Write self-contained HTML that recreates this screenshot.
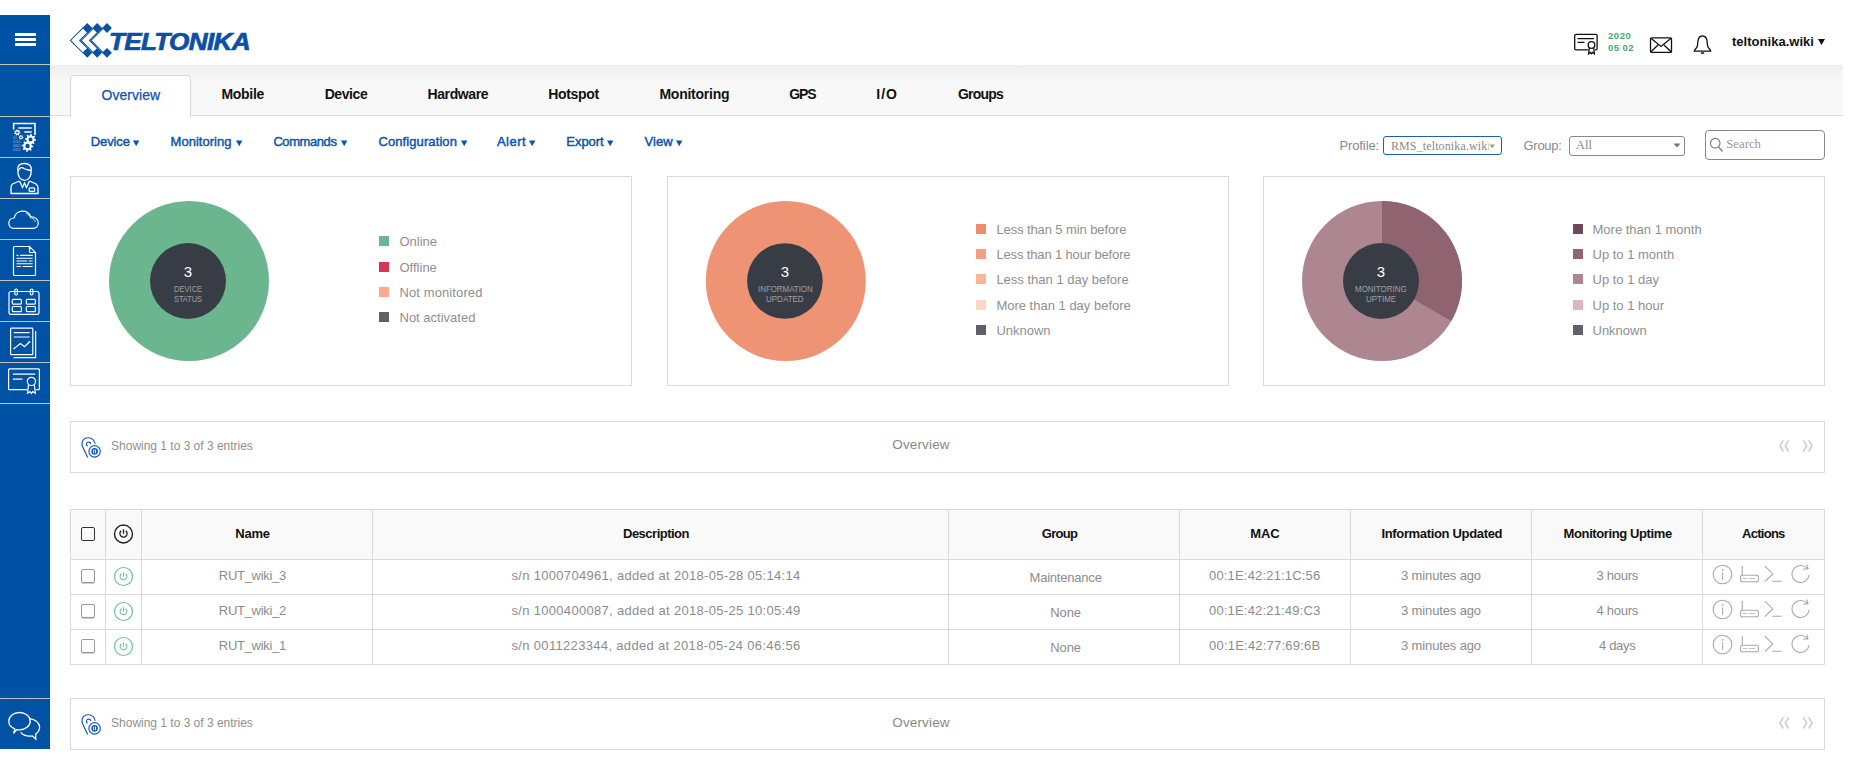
<!DOCTYPE html>
<html><head><meta charset="utf-8"><style>
html,body{margin:0;padding:0;background:#fff;width:1858px;height:765px;overflow:hidden;position:relative;font-family:"Liberation Sans",sans-serif;}
.t{position:absolute;white-space:nowrap;}
.b{position:absolute;box-sizing:content-box;}
.s{position:absolute;overflow:visible;}
</style></head><body>
<div class="b" style="left:0px;top:15px;width:50px;height:734px;background:#0052a4;"></div>
<div class="b" style="left:0px;top:64px;width:50px;height:1px;background:#c6c3bd;"></div>
<div class="b" style="left:0px;top:116px;width:50px;height:1px;background:#c6c3bd;"></div>
<div class="b" style="left:0px;top:157px;width:50px;height:1px;background:#c6c3bd;"></div>
<div class="b" style="left:0px;top:198px;width:50px;height:1px;background:#c6c3bd;"></div>
<div class="b" style="left:0px;top:239px;width:50px;height:1px;background:#c6c3bd;"></div>
<div class="b" style="left:0px;top:280px;width:50px;height:1px;background:#c6c3bd;"></div>
<div class="b" style="left:0px;top:321px;width:50px;height:1px;background:#c6c3bd;"></div>
<div class="b" style="left:0px;top:362px;width:50px;height:1px;background:#c6c3bd;"></div>
<div class="b" style="left:0px;top:403px;width:50px;height:1px;background:#c6c3bd;"></div>
<div class="b" style="left:0px;top:698px;width:50px;height:1px;background:#c6c3bd;"></div>
<div class="b" style="left:15px;top:33px;width:21px;height:3px;background:#fff;"></div>
<div class="b" style="left:15px;top:38px;width:21px;height:3px;background:#fff;"></div>
<div class="b" style="left:15px;top:43px;width:21px;height:3px;background:#fff;"></div>
<svg class="s" style="left:0px;top:116px;" width="50" height="41" viewBox="0 116 50 41"><path d="M13.6,129.5 V123.5 H35 V135" stroke="#fff" fill="none" stroke-width="1.6"/><path d="M18.3,128 H31.7 M24.3,132 H31.7" stroke="#fff" stroke-width="1.3"/><polygon points="20.40,132.50 20.32,133.21 19.28,133.50 19.00,133.94 19.20,135.00 18.59,135.38 17.71,134.75 17.20,134.80 16.49,135.62 15.81,135.38 15.76,134.30 15.40,133.94 14.32,133.89 14.08,133.21 14.90,132.50 14.95,131.99 14.32,131.11 14.70,130.50 15.76,130.70 16.20,130.42 16.49,129.38 17.20,129.30 17.71,130.25 18.20,130.42 19.20,130.00 19.70,130.50 19.28,131.50 19.45,131.99" fill="#fff"/><circle cx="17.2" cy="132.5" r="1.1" fill="#0052a4"/><polygon points="23.40,137.30 23.32,137.92 22.50,138.16 22.22,138.52 22.20,139.38 21.62,139.62 21.00,139.03 20.55,138.97 19.80,139.38 19.30,139.00 19.50,138.16 19.33,137.75 18.60,137.30 18.68,136.68 19.50,136.44 19.78,136.08 19.80,135.22 20.38,134.98 21.00,135.57 21.45,135.63 22.20,135.22 22.70,135.60 22.50,136.44 22.67,136.85" fill="#fff"/><circle cx="21" cy="137.3" r="0.9" fill="#0052a4"/><polygon points="36.10,139.50 35.99,140.59 34.23,141.04 33.85,141.74 34.46,143.46 33.61,144.16 32.04,143.23 31.29,143.45 30.50,145.10 29.41,144.99 28.96,143.23 28.26,142.85 26.54,143.46 25.84,142.61 26.77,141.04 26.55,140.29 24.90,139.50 25.01,138.41 26.77,137.96 27.15,137.26 26.54,135.54 27.39,134.84 28.96,135.77 29.71,135.55 30.50,133.90 31.59,134.01 32.04,135.77 32.74,136.15 34.46,135.54 35.16,136.39 34.23,137.96 34.45,138.71" fill="#fff"/><circle cx="30.5" cy="139.5" r="2" fill="#0052a4"/><polygon points="33.30,146.00 33.19,147.13 31.36,147.60 30.97,148.32 31.60,150.10 30.72,150.82 29.10,149.86 28.31,150.10 27.50,151.80 26.37,151.69 25.90,149.86 25.18,149.47 23.40,150.10 22.68,149.22 23.64,147.60 23.40,146.81 21.70,146.00 21.81,144.87 23.64,144.40 24.03,143.68 23.40,141.90 24.28,141.18 25.90,142.14 26.69,141.90 27.50,140.20 28.63,140.31 29.10,142.14 29.82,142.53 31.60,141.90 32.32,142.78 31.36,144.40 31.60,145.19" fill="#fff"/><circle cx="27.5" cy="146" r="2.2" fill="#0052a4"/><g fill="#a9bfdf" font-family="Liberation Sans" font-size="3.4" font-weight="400"><text x="13" y="139">01</text><text x="13" y="143">0110</text><text x="13" y="147">0001</text><text x="13" y="151">0110</text></g></svg>
<svg class="s" style="left:0px;top:157px;" width="50" height="41" viewBox="0 157 50 41"><g stroke="#fff" fill="none" stroke-width="1.3"><path d="M18,171 C17,165 20,163.5 24.5,163.5 C29,163.5 32,165.5 31.2,171 C31.5,176 28.5,180.3 24.5,180.3 C20.5,180.3 17.5,176 18,171 Z"/><path d="M18,171 C20,167 22,167 24,168.5 C26.5,170 29,169.5 31.2,171"/><path d="M19.5,181 L12.5,184 C11,185 11,186 11,188 V193.5 H38 V188 C38,186 37.5,185 36,184 L29.5,181"/><path d="M19.5,181 L22.5,187.5 L24.5,183 L26.5,187.5 L29.5,181"/><rect x="29.2" y="187.8" width="5.4" height="3.6" rx="1"/></g></svg>
<svg class="s" style="left:0px;top:198px;" width="50" height="41" viewBox="0 198 50 41"><path d="M13.5,228.3 C10.5,228.3 8.8,226 8.8,223.3 C8.8,220.3 11,218 14.2,218 C15,213.8 18.5,211.2 22.5,211.2 C26.5,211.2 29.5,213.5 30.8,216.8 C35,216.5 38.3,219.3 38.3,222.8 C38.3,226 36,228.3 33,228.3 Z" stroke="#fff" fill="none" stroke-width="1.2"/><path d="M26,213.5 C28.5,214.3 30,216 30.8,218.5 M31.5,218 C33.5,218.5 35,220 35.5,222" stroke="#fff" fill="none" stroke-width="0.8"/></svg>
<svg class="s" style="left:0px;top:239px;" width="50" height="41" viewBox="0 239 50 41"><path d="M14.5,246.5 H29.5 L35.5,252.5 V274.5 Q35.5,275.5 34.5,275.5 H14.5 Q13.5,275.5 13.5,274.5 V247.5 Q13.5,246.5 14.5,246.5 Z M29.5,246.5 V251.5 Q29.5,252.5 30.5,252.5 H35.5" stroke="#fff" fill="none" stroke-width="1.2"/><path d="M16.5,255.4 H18.5 M20,255.4 H32.7 M16.5,258.2 H32.7 M16.5,261 H27 M28.5,261 H32.7 M16.5,263.7 H32.7 M16.5,266.5 H21 M22.5,266.5 H32.7" stroke="#fff" stroke-width="1.1"/></svg>
<svg class="s" style="left:0px;top:280px;" width="50" height="41" viewBox="0 280 50 41"><g stroke="#fff" fill="none" stroke-width="1.2"><path d="M11,291.5 H37 Q39,291.5 39,293.5 V312.5 Q39,314.3 37,314.3 H11 Q9,314.3 9,312.5 V293.5 Q9,291.5 11,291.5 Z"/><rect x="14.8" y="289" width="2.6" height="6" rx="1.2"/><rect x="30.3" y="289" width="2.6" height="6" rx="1.2"/><rect x="12.3" y="299.4" width="9.1" height="4.8" rx="1"/><rect x="26.3" y="299.4" width="9.1" height="4.8" rx="1"/><rect x="12.3" y="306.5" width="9.1" height="5.2" rx="1"/><rect x="26.3" y="306.5" width="9.1" height="5.2" rx="1"/></g></svg>
<svg class="s" style="left:0px;top:321px;" width="50" height="41" viewBox="0 321 50 41"><g stroke="#fff" fill="none" stroke-width="1.2"><rect x="10.6" y="328.1" width="22.2" height="26.6" rx="0.8"/><path d="M35.6,331 V357.6 H13.5"/><path d="M13.8,332.6 H29.6 M13.8,337 H29.6"/><path d="M14.3,348.4 L20.4,343.6 L24.5,346.8 L29.4,342"/></g><circle cx="14.3" cy="348.4" r="0.9" fill="#fff"/><circle cx="29.4" cy="342" r="0.9" fill="#fff"/></svg>
<svg class="s" style="left:0px;top:362px;" width="50" height="41" viewBox="0 362 50 41"><g stroke="#fff" fill="none" stroke-width="1.2"><path d="M27,389.7 H9.5 Q8.6,389.7 8.6,388.7 V369.8 Q8.6,368.9 9.5,368.9 H38.5 Q39.4,368.9 39.4,369.8 V388.7 Q39.4,389.7 38.5,389.7 H36"/><path d="M12.8,374.2 H35.4 M12.8,379.2 H22.5"/><circle cx="31.4" cy="381.4" r="4.1"/><path d="M28.5,384.5 L27.5,393.3 L30,391.5 L31.4,393.5 L32.8,391.5 L35.3,393.3 L34.3,384.5"/></g></svg>
<svg class="s" style="left:0px;top:698px;" width="50" height="51" viewBox="0 698 50 51"><g transform="translate(0.3,0.6)"><g stroke="#fff" fill="none" stroke-width="1.3"><path d="M14.5,728.2 C10.5,726.8 8.5,724 8.5,720.6 C8.5,715.8 13.3,711.9 19.2,711.9 C25.1,711.9 29.9,715.8 29.9,720.6 C29.9,725.4 25.1,729.3 19.2,729.3 C18.2,729.3 17.3,729.2 16.5,729 L13.3,732.8 Z"/><path d="M29.4,718 C34.8,718.8 39.3,722 39.3,726.5 C39.3,729.5 37.8,732 35.3,733.5 L35.5,738.6 L32,735.3 C31,735.5 30.3,735.5 29.3,735.5 C25.5,735.5 22.2,734 20.3,731.8"/></g></g></svg>
<svg class="s" style="left:66px;top:18px;" width="50" height="45" viewBox="66 18 50 45"><polyline points="83.00,27.8 70.40,40.4 83.00,53" fill="none" stroke="#0b50a3" stroke-width="1.05"/><polyline points="92.25,27.8 79.65,40.4 92.25,53" fill="none" stroke="#0b50a3" stroke-width="1.05"/><polyline points="93.75,27.8 81.15,40.4 93.75,53" fill="none" stroke="#0b50a3" stroke-width="1.05"/><polyline points="102.10,27.8 89.50,40.4 102.10,53" fill="none" stroke="#0b50a3" stroke-width="1.05"/><polyline points="103.60,27.8 91.00,40.4 103.60,53" fill="none" stroke="#0b50a3" stroke-width="1.05"/><polygon points="82.39999999999999,28.0 87.3,23.1 92.2,28.0 87.3,32.9" fill="#0b50a3"/><polygon points="82.39999999999999,52.8 87.3,47.9 92.2,52.8 87.3,57.699999999999996" fill="#0b50a3"/><polygon points="92.24999999999999,28.0 97.14999999999999,23.1 102.05,28.0 97.14999999999999,32.9" fill="#0b50a3"/><polygon points="92.24999999999999,52.8 97.14999999999999,47.9 102.05,52.8 97.14999999999999,57.699999999999996" fill="#0b50a3"/><polygon points="102.1,28.0 107.0,23.1 111.9,28.0 107.0,32.9" fill="#0b50a3"/><polygon points="102.1,52.8 107.0,47.9 111.9,52.8 107.0,57.699999999999996" fill="#0b50a3"/></svg>
<div class="t" style="left:109px;top:31px;font-size:23px;line-height:23px;font-weight:700;font-style:italic;color:#0b50a3;letter-spacing:-0.6px;-webkit-text-stroke:0.7px #0b50a3;transform-origin:0 0;transform:scaleX(1.135);">TELTONIKA</div>
<svg class="s" style="left:1565px;top:25px;" width="160" height="40" viewBox="1565 25 160 40"><g stroke="#111" fill="none" stroke-width="1.3"><path d="M1588.3,49.8 H1576 Q1574.7,49.8 1574.7,48.5 V35.6 Q1574.7,34.3 1576,34.3 H1595.8 Q1597.1,34.3 1597.1,35.6 V48.5 Q1597.1,49.8 1595.8,49.8 H1594.8"/><path d="M1577.5,38.6 H1594 M1577.5,42.3 H1584.5"/><circle cx="1591.5" cy="45" r="3.3"/><path d="M1589.3,47.5 L1588.6,53.8 L1590.5,52.5 L1591.5,53.8 L1592.5,52.5 L1594.4,53.8 L1593.7,47.5"/><rect x="1650.5" y="37.8" width="21" height="14.6" rx="1.2"/><path d="M1651,38.3 L1661,46.5 L1671,38.3 M1651,51.8 L1658,45 M1671,51.8 L1664,45"/><path d="M1694.3,51.2 C1694,49.5 1696.5,48.8 1697.2,46.5 C1698,44 1697.5,41 1698.5,38.8 C1699.3,37 1700.8,35.9 1702.5,35.9 C1704.2,35.9 1705.7,37 1706.5,38.8 C1707.5,41 1707,44 1707.8,46.5 C1708.5,48.8 1711,49.5 1710.7,51.2 Z"/><path d="M1701,52.5 Q1702.5,54 1704,52.5"/></g></svg>
<div class="t" style="left:1608.00px;top:30.86px;font-size:9.5px;line-height:9.5px;color:#3aae6e;font-weight:700;font-family:'Liberation Sans', sans-serif;letter-spacing:0.542px;">2020</div>
<div class="t" style="left:1608.00px;top:42.76px;font-size:9.5px;line-height:9.5px;color:#3aae6e;font-weight:700;font-family:'Liberation Sans', sans-serif;letter-spacing:0.445px;">05 02</div>
<div class="t" style="left:1732.00px;top:34.80px;font-size:13px;line-height:13px;color:#111;font-weight:700;font-family:'Liberation Sans', sans-serif;letter-spacing:0.026px;">teltonika.wiki</div>
<svg class="s" style="left:1817px;top:38px" width="9" height="8" viewBox="0 0 9 8"><polygon points="1,1 8,1 4.5,7" fill="#111"/></svg>
<div class="b" style="left:50px;top:65px;width:1793px;height:51px;background:#f8f8f8;"></div>
<div class="b" style="left:50px;top:65px;width:1793px;height:17px;background:linear-gradient(#efefef,#f8f8f8);"></div>
<div class="b" style="left:50px;top:115px;width:1793px;height:1px;background:#dcdcdc;"></div>
<div class="b" style="left:70px;top:75px;width:119px;height:41px;background:#fff;border:1px solid #d9d9d9;border-bottom:none;border-radius:4px 4px 0 0;"></div>
<div class="t" style="left:101.50px;top:87.95px;font-size:14px;line-height:14px;color:#0b55a8;font-weight:400;font-family:'Liberation Sans', sans-serif;letter-spacing:0.032px;-webkit-text-stroke:0.25px #0b55a8;">Overview</div>
<div class="t" style="left:221.40px;top:87.25px;font-size:14px;line-height:14px;color:#111;font-weight:700;font-family:'Liberation Sans', sans-serif;letter-spacing:-0.272px;">Mobile</div>
<div class="t" style="left:324.70px;top:87.25px;font-size:14px;line-height:14px;color:#111;font-weight:700;font-family:'Liberation Sans', sans-serif;letter-spacing:-0.424px;">Device</div>
<div class="t" style="left:427.50px;top:87.25px;font-size:14px;line-height:14px;color:#111;font-weight:700;font-family:'Liberation Sans', sans-serif;letter-spacing:-0.401px;">Hardware</div>
<div class="t" style="left:548.30px;top:87.25px;font-size:14px;line-height:14px;color:#111;font-weight:700;font-family:'Liberation Sans', sans-serif;letter-spacing:-0.339px;">Hotspot</div>
<div class="t" style="left:659.40px;top:87.25px;font-size:14px;line-height:14px;color:#111;font-weight:700;font-family:'Liberation Sans', sans-serif;letter-spacing:-0.231px;">Monitoring</div>
<div class="t" style="left:789.30px;top:87.25px;font-size:14px;line-height:14px;color:#111;font-weight:700;font-family:'Liberation Sans', sans-serif;letter-spacing:-1.122px;">GPS</div>
<div class="t" style="left:876.20px;top:87.25px;font-size:14px;line-height:14px;color:#111;font-weight:700;font-family:'Liberation Sans', sans-serif;letter-spacing:1.077px;">I/O</div>
<div class="t" style="left:958.00px;top:87.25px;font-size:14px;line-height:14px;color:#111;font-weight:700;font-family:'Liberation Sans', sans-serif;letter-spacing:-0.797px;">Groups</div>
<div class="t" style="left:90.70px;top:135.20px;font-size:13px;line-height:13px;color:#0b55a8;font-weight:400;font-family:'Liberation Sans', sans-serif;letter-spacing:-0.089px;-webkit-text-stroke:0.45px #0b55a8;">Device</div>
<svg class="s" style="left:133.0px;top:140px" width="7" height="7" viewBox="0 0 7 7"><polygon points="0,0.4 6.4,0.4 3.2,6.3" fill="#0b55a8"/></svg>
<div class="t" style="left:170.60px;top:135.20px;font-size:13px;line-height:13px;color:#0b55a8;font-weight:400;font-family:'Liberation Sans', sans-serif;letter-spacing:0.020px;-webkit-text-stroke:0.45px #0b55a8;">Monitoring</div>
<svg class="s" style="left:236.0px;top:140px" width="7" height="7" viewBox="0 0 7 7"><polygon points="0,0.4 6.4,0.4 3.2,6.3" fill="#0b55a8"/></svg>
<div class="t" style="left:273.40px;top:135.20px;font-size:13px;line-height:13px;color:#0b55a8;font-weight:400;font-family:'Liberation Sans', sans-serif;letter-spacing:-0.421px;-webkit-text-stroke:0.45px #0b55a8;">Commands</div>
<svg class="s" style="left:341.0px;top:140px" width="7" height="7" viewBox="0 0 7 7"><polygon points="0,0.4 6.4,0.4 3.2,6.3" fill="#0b55a8"/></svg>
<div class="t" style="left:378.50px;top:135.20px;font-size:13px;line-height:13px;color:#0b55a8;font-weight:400;font-family:'Liberation Sans', sans-serif;letter-spacing:0.090px;-webkit-text-stroke:0.45px #0b55a8;">Configuration</div>
<svg class="s" style="left:461.0px;top:140px" width="7" height="7" viewBox="0 0 7 7"><polygon points="0,0.4 6.4,0.4 3.2,6.3" fill="#0b55a8"/></svg>
<div class="t" style="left:497.00px;top:135.20px;font-size:13px;line-height:13px;color:#0b55a8;font-weight:400;font-family:'Liberation Sans', sans-serif;letter-spacing:0.454px;-webkit-text-stroke:0.45px #0b55a8;">Alert</div>
<svg class="s" style="left:529.0px;top:140px" width="7" height="7" viewBox="0 0 7 7"><polygon points="0,0.4 6.4,0.4 3.2,6.3" fill="#0b55a8"/></svg>
<div class="t" style="left:566.30px;top:135.20px;font-size:13px;line-height:13px;color:#0b55a8;font-weight:400;font-family:'Liberation Sans', sans-serif;letter-spacing:-0.045px;-webkit-text-stroke:0.45px #0b55a8;">Export</div>
<svg class="s" style="left:607.0px;top:140px" width="7" height="7" viewBox="0 0 7 7"><polygon points="0,0.4 6.4,0.4 3.2,6.3" fill="#0b55a8"/></svg>
<div class="t" style="left:644.40px;top:135.20px;font-size:13px;line-height:13px;color:#0b55a8;font-weight:400;font-family:'Liberation Sans', sans-serif;letter-spacing:0.114px;-webkit-text-stroke:0.45px #0b55a8;">View</div>
<svg class="s" style="left:676.0px;top:140px" width="7" height="7" viewBox="0 0 7 7"><polygon points="0,0.4 6.4,0.4 3.2,6.3" fill="#0b55a8"/></svg>
<div class="t" style="left:1339.50px;top:138.90px;font-size:13px;line-height:13px;color:#8a8a8a;font-weight:400;font-family:'Liberation Sans', sans-serif;letter-spacing:-0.120px;">Profile:</div>
<div class="b" style="left:1383px;top:136px;width:117px;height:17px;border:1.5px solid #1d5fb0;border-radius:3px;background:#fff;overflow:hidden;"></div>
<div class="t" style="left:1390.90px;top:139.85px;font-size:12px;line-height:12px;color:#8a8a8a;font-weight:400;font-family:'Liberation Serif', serif;letter-spacing:0.129px;clip-path:inset(0 2px 0 0);">RMS_teltonika.wiki</div>
<svg class="s" style="left:1489px;top:144px" width="7" height="5" viewBox="0 0 7 5"><polygon points="0.5,0.5 6,0.5 3.25,4.2" fill="#999"/></svg>
<div class="t" style="left:1523.50px;top:138.90px;font-size:13px;line-height:13px;color:#8a8a8a;font-weight:400;font-family:'Liberation Sans', sans-serif;letter-spacing:-0.274px;">Group:</div>
<div class="b" style="left:1569px;top:136px;width:114px;height:18px;border:1px solid #888;border-radius:3px;background:#fff;"></div>
<div class="t" style="left:1575.80px;top:138.98px;font-size:12.8px;line-height:12.8px;color:#8a8a8a;font-weight:400;font-family:'Liberation Serif', serif;letter-spacing:0.000px;">All</div>
<svg class="s" style="left:1673px;top:143px" width="8" height="6" viewBox="0 0 8 6"><polygon points="0.5,0.5 7.5,0.5 4,4.5" fill="#777"/></svg>
<div class="b" style="left:1705px;top:130px;width:118px;height:28px;border:1px solid #888;border-radius:4px;background:#fff;"></div>
<svg class="s" style="left:1705px;top:130px;" width="30" height="30" viewBox="1705 130 30 30"><circle cx="1715.2" cy="143.2" r="4.8" stroke="#777" fill="none" stroke-width="1.1"/><path d="M1718.6,146.8 L1722.5,151.5" stroke="#777" stroke-width="1.2"/></svg>
<div class="t" style="left:1726.20px;top:137.88px;font-size:12.8px;line-height:12.8px;color:#999;font-weight:400;font-family:'Liberation Serif', serif;letter-spacing:0.000px;">Search</div>
<div class="b" style="left:70px;top:176px;width:562px;height:210px;border:1px solid #dadada;box-sizing:border-box;background:#fff;"></div>
<div class="b" style="left:667px;top:176px;width:562px;height:210px;border:1px solid #dadada;box-sizing:border-box;background:#fff;"></div>
<div class="b" style="left:1263px;top:176px;width:562px;height:210px;border:1px solid #dadada;box-sizing:border-box;background:#fff;"></div>
<svg class="s" style="left:100px;top:190px;" width="180" height="180" viewBox="100 190 180 180"><circle cx="189" cy="281" r="80" fill="#6bb68f"/><circle cx="188" cy="281" r="38" fill="#383c45"/></svg>
<svg class="s" style="left:697px;top:190px;" width="180" height="180" viewBox="697 190 180 180"><circle cx="785.8" cy="281" r="80" fill="#ee9474"/><circle cx="784.9" cy="281" r="37.8" fill="#383c45"/></svg>
<svg class="s" style="left:1292px;top:190px;" width="180" height="180" viewBox="1292 190 180 180"><circle cx="1382" cy="281" r="80" fill="#ad8690"/><path d="M1382,281 L1382,201 A80,80 0 0 1 1451.28,321.00 Z" fill="#8f6370"/><circle cx="1381" cy="281" r="38" fill="#383c45"/></svg>
<div class="t" style="left:183.83px;top:264.30px;font-size:15px;line-height:15px;color:#fff;font-weight:400;font-family:'Liberation Sans', sans-serif;letter-spacing:0.000px;">3</div>
<div class="t" style="left:173.90px;top:284.94px;font-size:8.7px;line-height:8.7px;color:#a0a0a0;font-weight:400;transform-origin:0 0;transform:scaleX(0.8706);">DEVICE</div>
<div class="t" style="left:174.00px;top:295.04px;font-size:8.7px;line-height:8.7px;color:#a0a0a0;font-weight:400;transform-origin:0 0;transform:scaleX(0.8477);">STATUS</div>
<div class="t" style="left:780.83px;top:264.30px;font-size:15px;line-height:15px;color:#fff;font-weight:400;font-family:'Liberation Sans', sans-serif;letter-spacing:0.000px;">3</div>
<div class="t" style="left:757.60px;top:284.94px;font-size:8.7px;line-height:8.7px;color:#a0a0a0;font-weight:400;transform-origin:0 0;transform:scaleX(0.9095);">INFORMATION</div>
<div class="t" style="left:766.15px;top:295.04px;font-size:8.7px;line-height:8.7px;color:#a0a0a0;font-weight:400;transform-origin:0 0;transform:scaleX(0.9212);">UPDATED</div>
<div class="t" style="left:1376.83px;top:264.30px;font-size:15px;line-height:15px;color:#fff;font-weight:400;font-family:'Liberation Sans', sans-serif;letter-spacing:0.000px;">3</div>
<div class="t" style="left:1355.15px;top:284.94px;font-size:8.7px;line-height:8.7px;color:#a0a0a0;font-weight:400;transform-origin:0 0;transform:scaleX(0.9169);">MONITORING</div>
<div class="t" style="left:1365.90px;top:295.04px;font-size:8.7px;line-height:8.7px;color:#a0a0a0;font-weight:400;transform-origin:0 0;transform:scaleX(0.9188);">UPTIME</div>
<div class="b" style="left:379px;top:236px;width:10px;height:10px;background:#6bb68f;"></div>
<div class="t" style="left:399.50px;top:234.90px;font-size:13px;line-height:13px;color:#8f8f8f;font-weight:400;font-family:'Liberation Sans', sans-serif;letter-spacing:0.000px;">Online</div>
<div class="b" style="left:379px;top:262px;width:10px;height:10px;background:#d63555;"></div>
<div class="t" style="left:399.50px;top:260.90px;font-size:13px;line-height:13px;color:#8f8f8f;font-weight:400;font-family:'Liberation Sans', sans-serif;letter-spacing:0.000px;">Offline</div>
<div class="b" style="left:379px;top:287px;width:10px;height:10px;background:#fdab8a;"></div>
<div class="t" style="left:399.50px;top:285.90px;font-size:13px;line-height:13px;color:#8f8f8f;font-weight:400;font-family:'Liberation Sans', sans-serif;letter-spacing:0.104px;">Not monitored</div>
<div class="b" style="left:379px;top:312px;width:10px;height:10px;background:#625f6b;"></div>
<div class="t" style="left:399.50px;top:310.90px;font-size:13px;line-height:13px;color:#8f8f8f;font-weight:400;font-family:'Liberation Sans', sans-serif;letter-spacing:0.000px;">Not activated</div>
<div class="b" style="left:976px;top:224px;width:10px;height:10px;background:#ee8c69;"></div>
<div class="t" style="left:996.40px;top:222.90px;font-size:13px;line-height:13px;color:#8f8f8f;font-weight:400;font-family:'Liberation Sans', sans-serif;letter-spacing:-0.102px;">Less than 5 min before</div>
<div class="b" style="left:976px;top:249px;width:10px;height:10px;background:#f2a283;"></div>
<div class="t" style="left:996.40px;top:247.90px;font-size:13px;line-height:13px;color:#8f8f8f;font-weight:400;font-family:'Liberation Sans', sans-serif;letter-spacing:-0.144px;">Less than 1 hour before</div>
<div class="b" style="left:976px;top:274px;width:10px;height:10px;background:#fdb596;"></div>
<div class="t" style="left:996.40px;top:272.90px;font-size:13px;line-height:13px;color:#8f8f8f;font-weight:400;font-family:'Liberation Sans', sans-serif;letter-spacing:0.000px;">Less than 1 day before</div>
<div class="b" style="left:976px;top:300px;width:10px;height:10px;background:#fdd6c6;"></div>
<div class="t" style="left:996.40px;top:298.90px;font-size:13px;line-height:13px;color:#8f8f8f;font-weight:400;font-family:'Liberation Sans', sans-serif;letter-spacing:0.000px;">More than 1 day before</div>
<div class="b" style="left:976px;top:325px;width:10px;height:10px;background:#625f6b;"></div>
<div class="t" style="left:996.40px;top:323.90px;font-size:13px;line-height:13px;color:#8f8f8f;font-weight:400;font-family:'Liberation Sans', sans-serif;letter-spacing:0.000px;">Unknown</div>
<div class="b" style="left:1573px;top:224px;width:10px;height:10px;background:#6d4a58;"></div>
<div class="t" style="left:1592.50px;top:222.90px;font-size:13px;line-height:13px;color:#8f8f8f;font-weight:400;font-family:'Liberation Sans', sans-serif;letter-spacing:0.000px;">More than 1 month</div>
<div class="b" style="left:1573px;top:249px;width:10px;height:10px;background:#926373;"></div>
<div class="t" style="left:1592.50px;top:247.90px;font-size:13px;line-height:13px;color:#8f8f8f;font-weight:400;font-family:'Liberation Sans', sans-serif;letter-spacing:0.000px;">Up to 1 month</div>
<div class="b" style="left:1573px;top:274px;width:10px;height:10px;background:#ae8591;"></div>
<div class="t" style="left:1592.50px;top:272.90px;font-size:13px;line-height:13px;color:#8f8f8f;font-weight:400;font-family:'Liberation Sans', sans-serif;letter-spacing:0.000px;">Up to 1 day</div>
<div class="b" style="left:1573px;top:300px;width:10px;height:10px;background:#dab7c1;"></div>
<div class="t" style="left:1592.50px;top:298.90px;font-size:13px;line-height:13px;color:#8f8f8f;font-weight:400;font-family:'Liberation Sans', sans-serif;letter-spacing:0.000px;">Up to 1 hour</div>
<div class="b" style="left:1573px;top:325px;width:10px;height:10px;background:#625f6b;"></div>
<div class="t" style="left:1592.50px;top:323.90px;font-size:13px;line-height:13px;color:#8f8f8f;font-weight:400;font-family:'Liberation Sans', sans-serif;letter-spacing:0.000px;">Unknown</div>
<div class="b" style="left:70px;top:421px;width:1755px;height:52px;border:1px solid #dadada;box-sizing:border-box;background:#fff;"></div>
<svg class="s" style="left:76px;top:432px;" width="30" height="30" viewBox="76 432 30 30"><g transform="translate(0.2,0.6)" stroke="#1a5fae" fill="none" stroke-width="1.2"><path d="M87.5,457 L82.3,446 C81.3,443.5 81.8,440 84,438.5 C86.5,436.5 90.5,436.8 92.8,439 C94,440.2 94.8,441.8 95,443.2"/><path d="M90.6,443.6 A2.2,2.2 0 1 0 87.4,445.6"/><circle cx="94.4" cy="450.8" r="5.7"/></g><g transform="translate(0.2,0.6)"><circle cx="94.4" cy="450.8" r="3.3" fill="#1a5fae"/><rect x="93" y="449" width="0.9" height="3.6" fill="#fff"/><rect x="94.9" y="449" width="0.9" height="3.6" fill="#fff"/></g></svg>
<div class="t" style="left:111.10px;top:439.84px;font-size:12px;line-height:12px;color:#8f8f8f;font-weight:400;font-family:'Liberation Sans', sans-serif;letter-spacing:-0.014px;">Showing 1 to 3 of 3 entries</div>
<div class="t" style="left:892.35px;top:438.37px;font-size:13.5px;line-height:13.5px;color:#888;font-weight:400;font-family:'Liberation Sans', sans-serif;letter-spacing:0.130px;">Overview</div>
<svg class="s" style="left:1770px;top:431px;" width="50" height="30" viewBox="1770 431 50 30"><g transform="translate(0,0)" stroke="#cdcdcd" fill="none" stroke-width="1.6"><path d="M1783.3,440.3 L1780,445.9 L1783.3,451.5 M1788.6,440.3 L1785.3,445.9 L1788.6,451.5"/><path d="M1803.4,440.3 L1806.7,445.9 L1803.4,451.5 M1808.7,440.3 L1812,445.9 L1808.7,451.5"/></g></svg>
<div class="b" style="left:70px;top:698px;width:1755px;height:52px;border:1px solid #dadada;box-sizing:border-box;background:#fff;"></div>
<svg class="s" style="left:76px;top:709px;" width="30" height="30" viewBox="76 709 30 30"><g transform="translate(0.2,277.6)" stroke="#1a5fae" fill="none" stroke-width="1.2"><path d="M87.5,457 L82.3,446 C81.3,443.5 81.8,440 84,438.5 C86.5,436.5 90.5,436.8 92.8,439 C94,440.2 94.8,441.8 95,443.2"/><path d="M90.6,443.6 A2.2,2.2 0 1 0 87.4,445.6"/><circle cx="94.4" cy="450.8" r="5.7"/></g><g transform="translate(0.2,277.6)"><circle cx="94.4" cy="450.8" r="3.3" fill="#1a5fae"/><rect x="93" y="449" width="0.9" height="3.6" fill="#fff"/><rect x="94.9" y="449" width="0.9" height="3.6" fill="#fff"/></g></svg>
<div class="t" style="left:111.10px;top:716.84px;font-size:12px;line-height:12px;color:#8f8f8f;font-weight:400;font-family:'Liberation Sans', sans-serif;letter-spacing:-0.014px;">Showing 1 to 3 of 3 entries</div>
<div class="t" style="left:892.35px;top:716.47px;font-size:13.5px;line-height:13.5px;color:#888;font-weight:400;font-family:'Liberation Sans', sans-serif;letter-spacing:0.130px;">Overview</div>
<svg class="s" style="left:1770px;top:708px;" width="50" height="30" viewBox="1770 708 50 30"><g transform="translate(0,277)" stroke="#cdcdcd" fill="none" stroke-width="1.6"><path d="M1783.3,440.3 L1780,445.9 L1783.3,451.5 M1788.6,440.3 L1785.3,445.9 L1788.6,451.5"/><path d="M1803.4,440.3 L1806.7,445.9 L1803.4,451.5 M1808.7,440.3 L1812,445.9 L1808.7,451.5"/></g></svg>
<div class="b" style="left:70px;top:509px;width:1755px;height:50px;background:#f9f9f9;"></div>
<div class="b" style="left:70px;top:559px;width:1755px;height:105px;background:#fff;"></div>
<div class="b" style="left:70px;top:509px;width:1755px;height:1px;background:#dadada;"></div>
<div class="b" style="left:70px;top:559px;width:1755px;height:1px;background:#dadada;"></div>
<div class="b" style="left:70px;top:594px;width:1755px;height:1px;background:#dadada;"></div>
<div class="b" style="left:70px;top:629px;width:1755px;height:1px;background:#dadada;"></div>
<div class="b" style="left:70px;top:664px;width:1755px;height:1px;background:#dadada;"></div>
<div class="b" style="left:70px;top:509px;width:1px;height:156px;background:#dadada;"></div>
<div class="b" style="left:105px;top:509px;width:1px;height:156px;background:#dadada;"></div>
<div class="b" style="left:141px;top:509px;width:1px;height:156px;background:#dadada;"></div>
<div class="b" style="left:372px;top:509px;width:1px;height:156px;background:#dadada;"></div>
<div class="b" style="left:948px;top:509px;width:1px;height:156px;background:#dadada;"></div>
<div class="b" style="left:1179px;top:509px;width:1px;height:156px;background:#dadada;"></div>
<div class="b" style="left:1350px;top:509px;width:1px;height:156px;background:#dadada;"></div>
<div class="b" style="left:1531px;top:509px;width:1px;height:156px;background:#dadada;"></div>
<div class="b" style="left:1702px;top:509px;width:1px;height:156px;background:#dadada;"></div>
<div class="b" style="left:1824px;top:509px;width:1px;height:156px;background:#dadada;"></div>
<div class="t" style="left:235.35px;top:526.80px;font-size:13px;line-height:13px;color:#111;font-weight:700;font-family:'Liberation Sans', sans-serif;letter-spacing:-0.277px;">Name</div>
<div class="t" style="left:623.00px;top:526.80px;font-size:13px;line-height:13px;color:#111;font-weight:700;font-family:'Liberation Sans', sans-serif;letter-spacing:-0.501px;">Description</div>
<div class="t" style="left:1041.75px;top:526.80px;font-size:13px;line-height:13px;color:#111;font-weight:700;font-family:'Liberation Sans', sans-serif;letter-spacing:-0.699px;">Group</div>
<div class="t" style="left:1250.35px;top:526.80px;font-size:13px;line-height:13px;color:#111;font-weight:700;font-family:'Liberation Sans', sans-serif;letter-spacing:-0.102px;">MAC</div>
<div class="t" style="left:1381.40px;top:526.80px;font-size:13px;line-height:13px;color:#111;font-weight:700;font-family:'Liberation Sans', sans-serif;letter-spacing:-0.332px;">Information Updated</div>
<div class="t" style="left:1563.60px;top:526.80px;font-size:13px;line-height:13px;color:#111;font-weight:700;font-family:'Liberation Sans', sans-serif;letter-spacing:-0.389px;">Monitoring Uptime</div>
<div class="t" style="left:1742.00px;top:526.80px;font-size:13px;line-height:13px;color:#111;font-weight:700;font-family:'Liberation Sans', sans-serif;letter-spacing:-0.724px;">Actions</div>
<div class="b" style="left:81px;top:527px;width:12px;height:12px;border:1.5px solid #333;border-radius:2px;"></div>
<svg class="s" style="left:110px;top:520px;" width="28" height="28" viewBox="110 520 28 28"><circle cx="123.5" cy="534" r="9" stroke="#222" fill="none" stroke-width="1.4"/><path d="M121.2,530.8 A3.6,3.6 0 1 0 125.8,530.8" stroke="#222" fill="none" stroke-width="1.3"/><path d="M123.5,529.3 V533.8" stroke="#222" stroke-width="1.3"/></svg>
<div class="b" style="left:81px;top:569.3px;width:12px;height:12px;border:1px solid #9a9a9a;border-radius:2px;box-shadow:0 1px 0 #ccc;"></div>
<svg class="s" style="left:110px;top:562px;" width="28" height="28" viewBox="110 562 28 28"><circle cx="123.5" cy="576.5" r="9" stroke="#6cc19a" fill="none" stroke-width="1.2"/><path d="M121.4,573.7 A3.4,3.4 0 1 0 125.6,573.7" stroke="#6cc19a" fill="none" stroke-width="1.1"/><path d="M123.5,572.2 V576.7" stroke="#6cc19a" stroke-width="1.1"/></svg>
<div class="t" style="left:218.80px;top:569.00px;font-size:13px;line-height:13px;color:#8c8c8c;font-weight:400;font-family:'Liberation Sans', sans-serif;letter-spacing:-0.287px;">RUT_wiki_3</div>
<div class="t" style="left:511.50px;top:569.00px;font-size:13px;line-height:13px;color:#8c8c8c;font-weight:400;font-family:'Liberation Sans', sans-serif;letter-spacing:0.309px;">s/n 1000704961, added at 2018-05-28 05:14:14</div>
<div class="t" style="left:1029.50px;top:571.00px;font-size:13px;line-height:13px;color:#8c8c8c;font-weight:400;font-family:'Liberation Sans', sans-serif;letter-spacing:-0.204px;">Maintenance</div>
<div class="t" style="left:1209.00px;top:569.00px;font-size:13px;line-height:13px;color:#8c8c8c;font-weight:400;font-family:'Liberation Sans', sans-serif;letter-spacing:0.175px;">00:1E:42:21:1C:56</div>
<div class="t" style="left:1401.05px;top:569.00px;font-size:13px;line-height:13px;color:#8c8c8c;font-weight:400;font-family:'Liberation Sans', sans-serif;letter-spacing:-0.136px;">3 minutes ago</div>
<div class="t" style="left:1596.50px;top:569.00px;font-size:13px;line-height:13px;color:#8c8c8c;font-weight:400;font-family:'Liberation Sans', sans-serif;letter-spacing:-0.279px;">3 hours</div>
<svg class="s" style="left:1705px;top:561px;" width="110" height="30" viewBox="1705 561 110 30"><g transform="translate(0,0.0)" stroke="#a9a9a9" fill="none" stroke-width="1.1"><circle cx="1722.5" cy="574.5" r="9.3"/><path d="M1722.6,572.4 V579.8"/><path d="M1742.3,565.9 V575.4"/><rect x="1740.6" y="575.2" width="17.8" height="6.6" rx="1.5"/><path d="M1743,578.5 H1747 M1748.5,578.5 H1755" stroke-width="1.2" stroke="#c4c4c4"/><path d="M1742,582.3 V583 M1756.8,582.3 V583" stroke-width="1"/><path d="M1764.8,566.2 L1772.8,573.9 L1764.8,581.6 M1772.2,581.3 H1781.7"/><path d="M1807.8,569.5 A8.5,8.5 0 1 0 1809,575" /><path d="M1803.2,569.2 L1808,568.5 L1806.8,564.5"/></g><g transform="translate(0,0.0)"><circle cx="1722.7" cy="569.8" r="0.9" fill="#a9a9a9"/></g></svg>
<div class="b" style="left:81px;top:604.3px;width:12px;height:12px;border:1px solid #9a9a9a;border-radius:2px;box-shadow:0 1px 0 #ccc;"></div>
<svg class="s" style="left:110px;top:597px;" width="28" height="28" viewBox="110 597 28 28"><circle cx="123.5" cy="611.5" r="9" stroke="#6cc19a" fill="none" stroke-width="1.2"/><path d="M121.4,608.7 A3.4,3.4 0 1 0 125.6,608.7" stroke="#6cc19a" fill="none" stroke-width="1.1"/><path d="M123.5,607.2 V611.7" stroke="#6cc19a" stroke-width="1.1"/></svg>
<div class="t" style="left:218.80px;top:604.00px;font-size:13px;line-height:13px;color:#8c8c8c;font-weight:400;font-family:'Liberation Sans', sans-serif;letter-spacing:-0.287px;">RUT_wiki_2</div>
<div class="t" style="left:511.50px;top:604.00px;font-size:13px;line-height:13px;color:#8c8c8c;font-weight:400;font-family:'Liberation Sans', sans-serif;letter-spacing:0.309px;">s/n 1000400087, added at 2018-05-25 10:05:49</div>
<div class="t" style="left:1050.25px;top:606.00px;font-size:13px;line-height:13px;color:#8c8c8c;font-weight:400;font-family:'Liberation Sans', sans-serif;letter-spacing:-0.095px;">None</div>
<div class="t" style="left:1209.00px;top:604.00px;font-size:13px;line-height:13px;color:#8c8c8c;font-weight:400;font-family:'Liberation Sans', sans-serif;letter-spacing:0.175px;">00:1E:42:21:49:C3</div>
<div class="t" style="left:1401.05px;top:604.00px;font-size:13px;line-height:13px;color:#8c8c8c;font-weight:400;font-family:'Liberation Sans', sans-serif;letter-spacing:-0.136px;">3 minutes ago</div>
<div class="t" style="left:1596.50px;top:604.00px;font-size:13px;line-height:13px;color:#8c8c8c;font-weight:400;font-family:'Liberation Sans', sans-serif;letter-spacing:-0.279px;">4 hours</div>
<svg class="s" style="left:1705px;top:596px;" width="110" height="30" viewBox="1705 596 110 30"><g transform="translate(0,35.0)" stroke="#a9a9a9" fill="none" stroke-width="1.1"><circle cx="1722.5" cy="574.5" r="9.3"/><path d="M1722.6,572.4 V579.8"/><path d="M1742.3,565.9 V575.4"/><rect x="1740.6" y="575.2" width="17.8" height="6.6" rx="1.5"/><path d="M1743,578.5 H1747 M1748.5,578.5 H1755" stroke-width="1.2" stroke="#c4c4c4"/><path d="M1742,582.3 V583 M1756.8,582.3 V583" stroke-width="1"/><path d="M1764.8,566.2 L1772.8,573.9 L1764.8,581.6 M1772.2,581.3 H1781.7"/><path d="M1807.8,569.5 A8.5,8.5 0 1 0 1809,575" /><path d="M1803.2,569.2 L1808,568.5 L1806.8,564.5"/></g><g transform="translate(0,35.0)"><circle cx="1722.7" cy="569.8" r="0.9" fill="#a9a9a9"/></g></svg>
<div class="b" style="left:81px;top:639.3px;width:12px;height:12px;border:1px solid #9a9a9a;border-radius:2px;box-shadow:0 1px 0 #ccc;"></div>
<svg class="s" style="left:110px;top:632px;" width="28" height="28" viewBox="110 632 28 28"><circle cx="123.5" cy="646.5" r="9" stroke="#6cc19a" fill="none" stroke-width="1.2"/><path d="M121.4,643.7 A3.4,3.4 0 1 0 125.6,643.7" stroke="#6cc19a" fill="none" stroke-width="1.1"/><path d="M123.5,642.2 V646.7" stroke="#6cc19a" stroke-width="1.1"/></svg>
<div class="t" style="left:218.80px;top:639.00px;font-size:13px;line-height:13px;color:#8c8c8c;font-weight:400;font-family:'Liberation Sans', sans-serif;letter-spacing:-0.287px;">RUT_wiki_1</div>
<div class="t" style="left:511.50px;top:639.00px;font-size:13px;line-height:13px;color:#8c8c8c;font-weight:400;font-family:'Liberation Sans', sans-serif;letter-spacing:0.331px;">s/n 0011223344, added at 2018-05-24 06:46:56</div>
<div class="t" style="left:1050.25px;top:641.00px;font-size:13px;line-height:13px;color:#8c8c8c;font-weight:400;font-family:'Liberation Sans', sans-serif;letter-spacing:-0.095px;">None</div>
<div class="t" style="left:1209.00px;top:639.00px;font-size:13px;line-height:13px;color:#8c8c8c;font-weight:400;font-family:'Liberation Sans', sans-serif;letter-spacing:0.218px;">00:1E:42:77:69:6B</div>
<div class="t" style="left:1401.05px;top:639.00px;font-size:13px;line-height:13px;color:#8c8c8c;font-weight:400;font-family:'Liberation Sans', sans-serif;letter-spacing:-0.136px;">3 minutes ago</div>
<div class="t" style="left:1598.91px;top:639.00px;font-size:13px;line-height:13px;color:#8c8c8c;font-weight:400;font-family:'Liberation Sans', sans-serif;letter-spacing:-0.287px;">4 days</div>
<svg class="s" style="left:1705px;top:631px;" width="110" height="30" viewBox="1705 631 110 30"><g transform="translate(0,70.0)" stroke="#a9a9a9" fill="none" stroke-width="1.1"><circle cx="1722.5" cy="574.5" r="9.3"/><path d="M1722.6,572.4 V579.8"/><path d="M1742.3,565.9 V575.4"/><rect x="1740.6" y="575.2" width="17.8" height="6.6" rx="1.5"/><path d="M1743,578.5 H1747 M1748.5,578.5 H1755" stroke-width="1.2" stroke="#c4c4c4"/><path d="M1742,582.3 V583 M1756.8,582.3 V583" stroke-width="1"/><path d="M1764.8,566.2 L1772.8,573.9 L1764.8,581.6 M1772.2,581.3 H1781.7"/><path d="M1807.8,569.5 A8.5,8.5 0 1 0 1809,575" /><path d="M1803.2,569.2 L1808,568.5 L1806.8,564.5"/></g><g transform="translate(0,70.0)"><circle cx="1722.7" cy="569.8" r="0.9" fill="#a9a9a9"/></g></svg>
</body></html>
